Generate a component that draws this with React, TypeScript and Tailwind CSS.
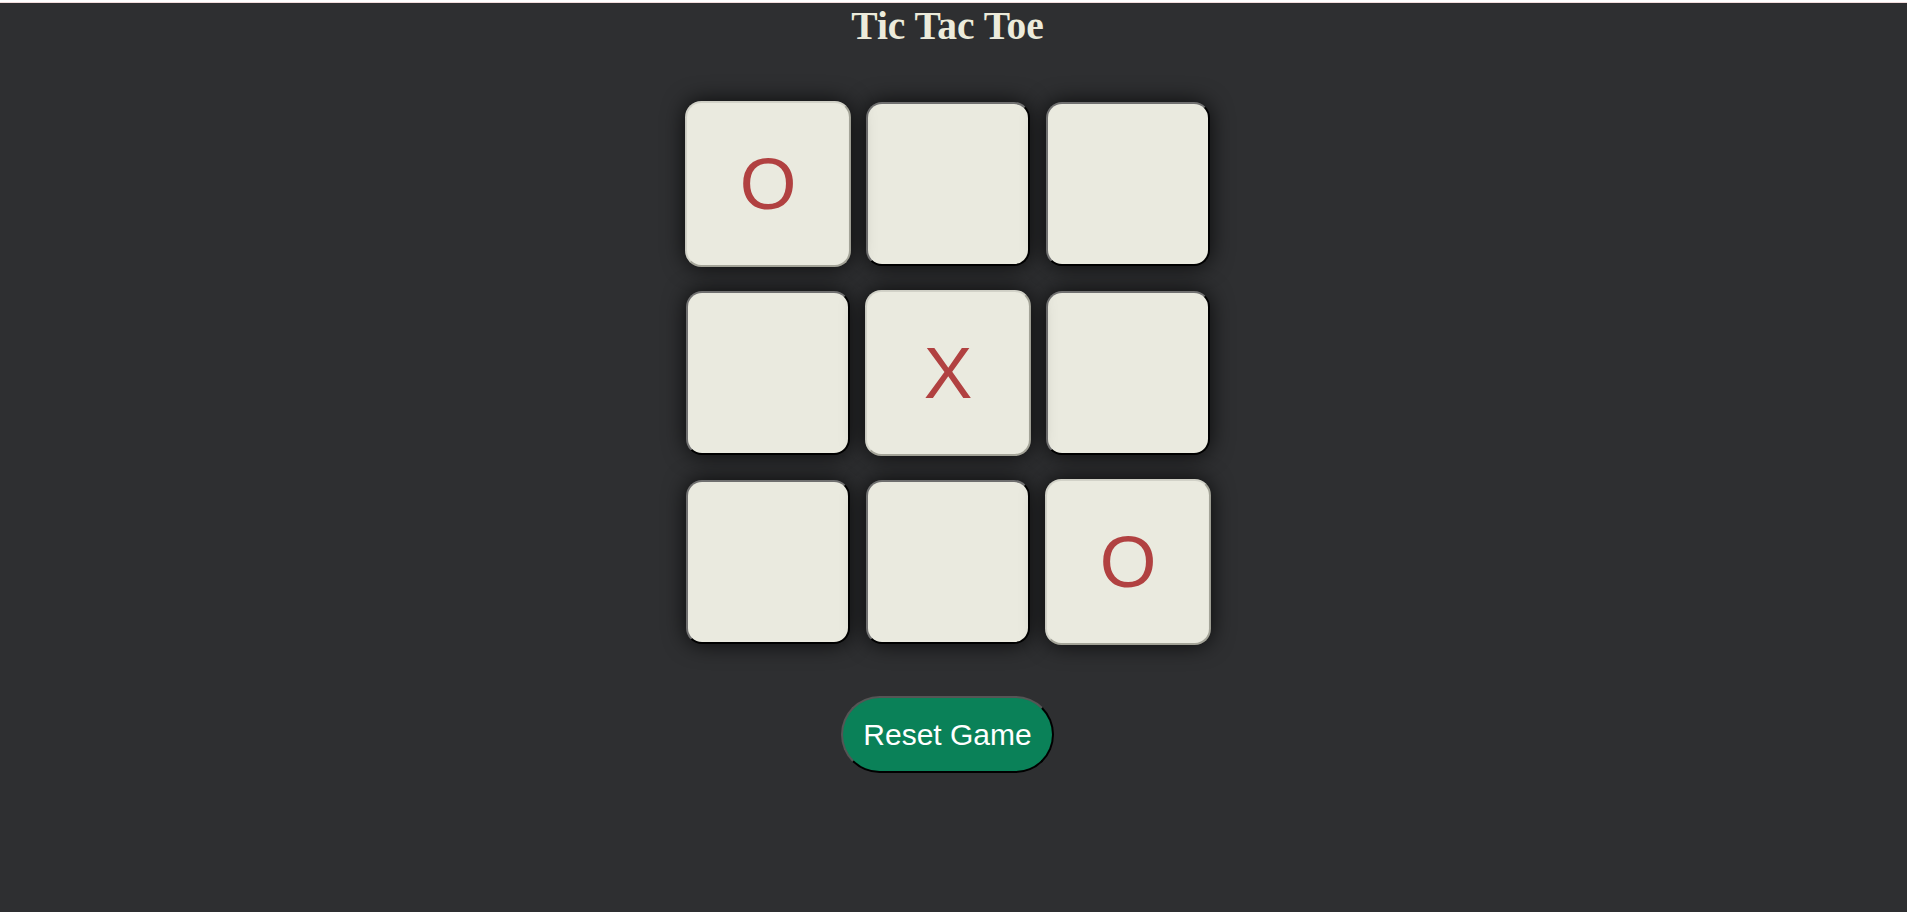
import { useState } from "react";

type Mark = "X" | "O" | null;

const startBoard: Mark[] = ["O", null, null, null, "X", null, null, null, "O"];

export default function App() {
  const [board, setBoard] = useState<Mark[]>(startBoard);
  const [turn, setTurn] = useState<"X" | "O">("X");

  const play = (i: number) => {
    if (board[i]) return;
    const next = [...board];
    next[i] = turn;
    setBoard(next);
    setTurn(turn === "X" ? "O" : "X");
  };

  const reset = () => {
    setBoard(Array(9).fill(null));
    setTurn("X");
  };

  return (
    <div className="min-h-screen bg-[#2e2f31]">
      <div className="h-[2px] bg-white" />
      <div className="h-px bg-[#f1dcdc]" />
      <div className="flex flex-col items-center pr-3">
        <h1 className="text-[39.5px] font-bold leading-[47px] text-[#ecebdb] [font-family:'Liberation_Serif',serif]">
          Tic Tac Toe
        </h1>

        <div className="mt-[52px] grid grid-cols-[164px_164px_164px] gap-x-4 gap-y-[25px]">
          {board.map((cell, i) => (
            <button
              key={i}
              type="button"
              onClick={() => play(i)}
              className={`flex h-[164px] w-[164px] items-center justify-center rounded-[16px] border-2 bg-[#eaeadf] text-[72px] text-[#b14141] shadow-[0_0_22px_rgba(0,0,0,0.8)] [font-family:'Liberation_Sans',Arial,sans-serif] ${
                cell
                  ? "scale-[1.012] border-t-[#d2d2c8] border-l-[#d2d2c8] border-r-[#a4a498] border-b-[#a4a498]"
                  : "border-t-[#707070] border-l-[#707070] border-r-black border-b-black"
              }`}
            >
              {cell}
            </button>
          ))}
        </div>

        <button
          type="button"
          onClick={reset}
          className="mt-[52px] h-[77px] rounded-full border-2 border-t-[#555] border-l-[#555] border-r-black border-b-black bg-[#0a8158] px-[20px] text-[30px] text-white [font-family:'Liberation_Sans',Arial,sans-serif]"
        >
          Reset Game
        </button>
      </div>
    </div>
  );
}
